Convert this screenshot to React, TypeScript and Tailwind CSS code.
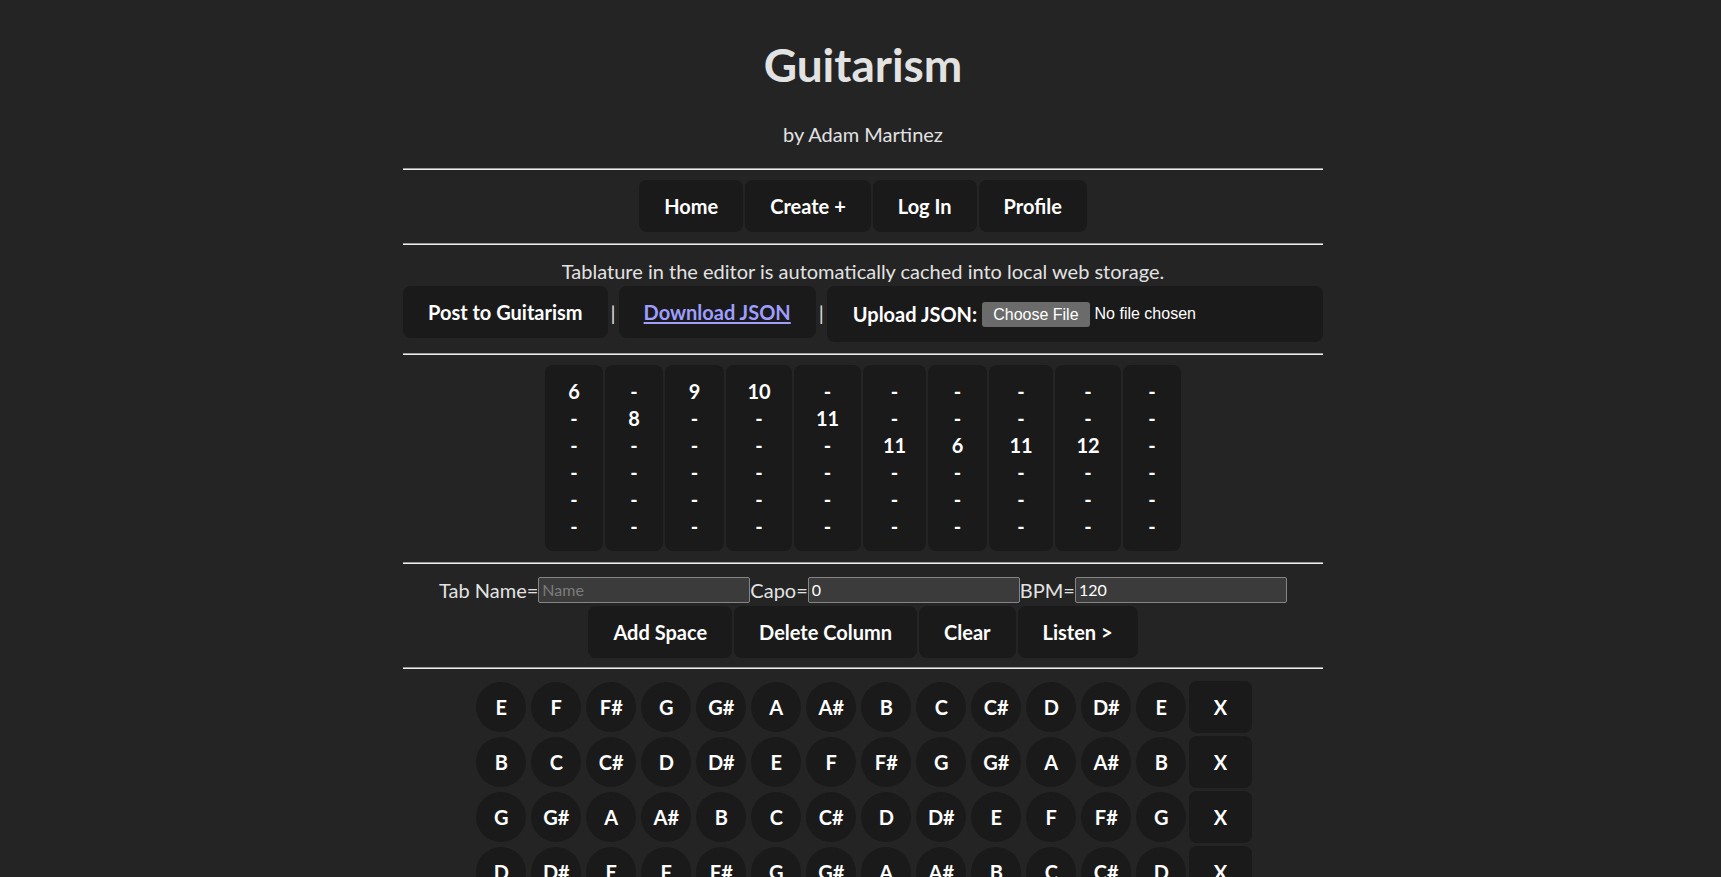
import React from "react";

const tabCols: { w: string; v: string[] }[] = [
  { w: "w-[58px]", v: ["6", "-", "-", "-", "-", "-"] },
  { w: "w-[58px]", v: ["-", "8", "-", "-", "-", "-"] },
  { w: "w-[59px]", v: ["9", "-", "-", "-", "-", "-"] },
  { w: "w-[66px]", v: ["10", "-", "-", "-", "-", "-"] },
  { w: "w-[67px]", v: ["-", "11", "-", "-", "-", "-"] },
  { w: "w-[63px]", v: ["-", "-", "11", "-", "-", "-"] },
  { w: "w-[59px]", v: ["-", "-", "6", "-", "-", "-"] },
  { w: "w-[64px]", v: ["-", "-", "11", "-", "-", "-"] },
  { w: "w-[66px]", v: ["-", "-", "12", "-", "-", "-"] },
  { w: "w-[58px]", v: ["-", "-", "-", "-", "-", "-"] },
];

const CHROMATIC = ["C", "C#", "D", "D#", "E", "F", "F#", "G", "G#", "A", "A#", "B"];
const strings = ["E", "B", "G", "D", "A", "E"];
const noteRows = strings.map((s) => {
  const start = CHROMATIC.indexOf(s);
  return Array.from({ length: 13 }, (_, i) => CHROMATIC[(start + i) % 12]);
});

function Btn({ children, className = "" }: { children: React.ReactNode; className?: string }) {
  return (
    <button
      className={
        "rounded-[8px] border border-transparent bg-[#1a1a1a] px-[24px] py-[12px] font-bold leading-[26px] text-white " +
        className
      }
    >
      {children}
    </button>
  );
}

function Rule({ className = "" }: { className?: string }) {
  return <div className={"h-[2px] w-full border-t border-b border-t-[#9a9a9a] border-b-[#eeeeee] " + className} />;
}

export default function App() {
  return (
    <div className="min-h-screen bg-[#242424] pb-[40px] pl-[5px] text-[20px] leading-[30px] text-[#e2e2e2] [font-family:Lato,'Open_Sans',sans-serif]">
      <div className="mx-auto flex w-[920px] flex-col items-center pt-[35px] text-center">
        <h1 className="text-[46px] font-bold leading-[60px] text-[#e2e2e2]">Guitarism</h1>
        <p className="mt-[24px]">by Adam Martinez</p>
        <Rule className="mt-[19px]" />
        <nav className="mt-[10px] flex justify-center gap-[2px]">
          <Btn>Home</Btn>
          <Btn>Create +</Btn>
          <Btn>Log In</Btn>
          <Btn>Profile</Btn>
        </nav>
        <Rule className="mt-[11px]" />
        <p className="mt-[11px]">Tablature in the editor is automatically cached into local web storage.</p>
        <div className="flex w-full items-start">
          <Btn>Post to Guitarism</Btn>
          <span className="px-[3px] leading-[55px]">|</span>
          <Btn>
            <a className="text-[#9e9eff] underline underline-offset-2">Download JSON</a>
          </Btn>
          <span className="px-[3px] leading-[55px]">|</span>
          <div className="flex h-[56px] flex-1 items-center rounded-[8px] bg-[#1a1a1a] pl-[26px]">
            <span className="font-bold text-white">Upload JSON:</span>
            <span className="ml-[5px] flex h-[25px] items-center rounded-[3px] bg-[#6b6b6b] px-[11px] text-[16px] leading-[25px] text-white [font-family:'Liberation_Sans',Arial,sans-serif]">
              Choose File
            </span>
            <span className="ml-[5px] text-[16px] text-white [font-family:'Liberation_Sans',Arial,sans-serif]">
              No file chosen
            </span>
          </div>
        </div>
        <Rule className="mt-[11px]" />
        <div className="mt-[10px] flex justify-center gap-[2px]">
          {tabCols.map((col, ci) => (
            <button
              key={ci}
              className={
                "flex flex-col items-center rounded-[8px] border border-transparent bg-[#1a1a1a] pt-[12px] pb-[10px] font-bold text-white " +
                col.w
              }
            >
              {col.v.map((v, ri) => (
                <span key={ri} className="leading-[27px]">
                  {v}
                </span>
              ))}
            </button>
          ))}
        </div>
        <Rule className="mt-[11px]" />
        <div className="mt-[11px] flex items-center justify-center">
          <span>Tab Name=</span>
          <input
            className="h-[26px] w-[212px] rounded-[2px] border border-[#858585] bg-[#3b3b3b] px-[3px] text-[16px] text-white outline-none placeholder:text-[#7b7b7b]"
            placeholder="Name"
          />
          <span>Capo=</span>
          <input
            className="h-[26px] w-[212px] rounded-[2px] border border-[#858585] bg-[#3b3b3b] px-[3px] text-[16px] text-white outline-none"
            defaultValue="0"
          />
          <span>BPM=</span>
          <input
            className="h-[26px] w-[212px] rounded-[2px] border border-[#858585] bg-[#3b3b3b] px-[3px] text-[16px] text-white outline-none"
            defaultValue="120"
          />
        </div>
        <div className="mt-[1px] flex justify-center gap-[2px]">
          <Btn>Add Space</Btn>
          <Btn>Delete Column</Btn>
          <Btn>Clear</Btn>
          <Btn>Listen &gt;</Btn>
        </div>
        <Rule className="mt-[9px]" />
        <div className="mt-[10px] flex flex-col items-center">
          {noteRows.map((row, ri) => (
            <div key={ri} className="flex items-center">
              {row.map((n, ni) => (
                <button
                  key={ni}
                  className="m-[2.5px] flex h-[50px] w-[50px] items-center justify-center rounded-full bg-[#1a1a1a] font-bold text-white"
                >
                  {n}
                </button>
              ))}
              <Btn>X</Btn>
            </div>
          ))}
        </div>
      </div>
    </div>
  );
}
